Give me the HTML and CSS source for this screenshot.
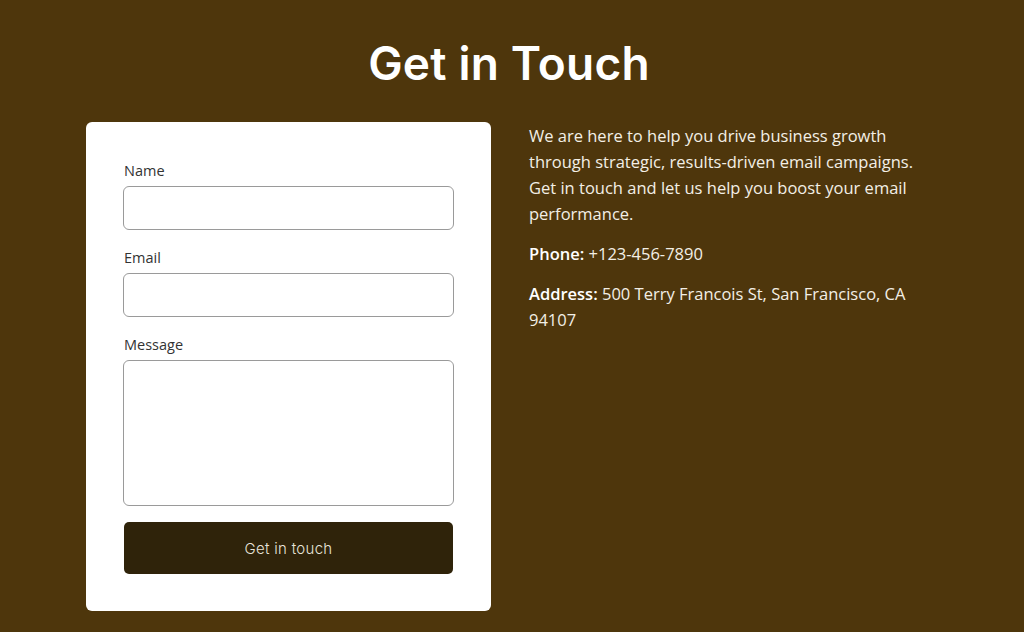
FILE: index.html
```html
<!DOCTYPE html>
<html lang="en">
<head>
<meta charset="utf-8">
<title>Get in Touch</title>
<link rel="stylesheet" href="styles.css">
</head>
<body>
<main class="page">
  <h1 class="title">Get in Touch</h1>
  <section class="content">
    <form class="card">
      <div class="field">
        <label class="label" for="name">Name</label>
        <input class="input" id="name" type="text">
      </div>
      <div class="field">
        <label class="label" for="email">Email</label>
        <input class="input" id="email" type="email">
      </div>
      <div class="field">
        <label class="label" for="message">Message</label>
        <textarea class="input textarea" id="message"></textarea>
      </div>
      <button class="button" type="button">Get in touch</button>
    </form>
    <div class="info">
      <p class="para">We are here to help you drive business growth through strategic, results-driven email campaigns. Get in touch and let us help you boost your email performance.</p>
      <p class="para"><strong class="key">Phone:</strong> <span>+123-456-7890</span></p>
      <p class="para"><strong class="key">Address:</strong> <span>500 Terry Francois St, San Francisco, CA</span><br><span>94107</span></p>
    </div>
  </section>
</main>
</body>
</html>
```
FILE: styles.css
```css
html, body {
  margin: 0;
  height: 100%;
}
body {
  background: #4e360c;
  font-family: "Open Sans", "Noto Sans", sans-serif;
  overflow: hidden;
}
.page {
  padding: 30px 0 0 86px;
}
.title {
  margin: 0 0 26px 0;
  padding-right: 92px;
  text-align: center;
  font-family: Inter, "Liberation Sans", sans-serif;
  font-weight: 600;
  font-size: 46px;
  line-height: 66px;
  letter-spacing: 0.2px;
  color: #ffffff;
}
.content {
  display: grid;
  grid-template-columns: 405px 400px;
  column-gap: 38px;
  align-items: start;
}
.card {
  background: #ffffff;
  border-radius: 6px;
  padding: 39px 37px 37px 37px;
  display: flex;
  flex-direction: column;
}
.field {
  display: flex;
  flex-direction: column;
  margin-bottom: 18px;
}
.label {
  font-size: 14.5px;
  line-height: 20px;
  color: #333333;
  margin-bottom: 5px;
  padding-left: 1px;
}
.input {
  box-sizing: border-box;
  width: 331px;
  height: 44px;
  border: 1px solid #9a9a9a;
  border-radius: 6px;
  background: #ffffff;
  margin: 0;
  padding: 0 10px;
  font-family: inherit;
  font-size: 15px;
}
.textarea {
  height: 146px;
  resize: none;
  padding: 10px;
}
.button {
  margin: -2px 0 0 1px;
  width: 329px;
  height: 52px;
  border: none;
  border-radius: 5px;
  background: #2f230a;
  color: #e8e3da;
  font-family: Inter, "Liberation Sans", sans-serif;
  font-weight: 300;
  font-size: 15px;
  letter-spacing: 0.3px;
}
.info {
  color: #f3efe6;
  font-size: 16.5px;
  line-height: 26px;
  padding-top: 1px;
}
.para {
  margin: 0 0 14px 0;
}
.key {
  font-weight: 600;
  color: #ffffff;
}
```
